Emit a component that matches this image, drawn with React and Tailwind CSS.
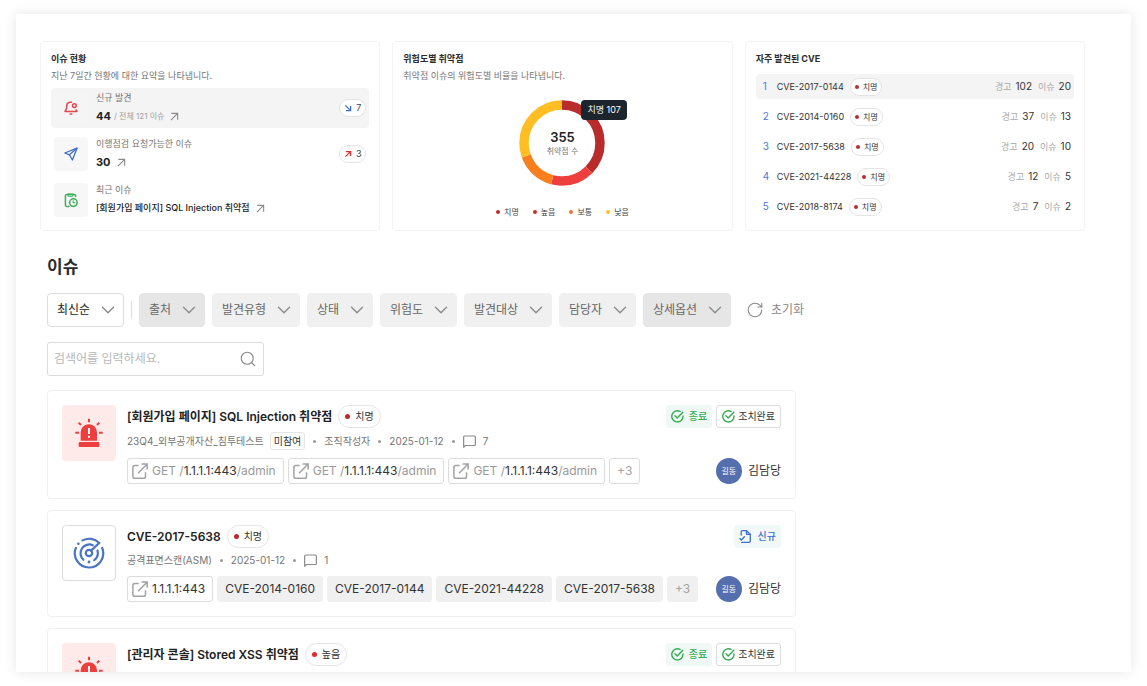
import React, { useState } from "react";
import { ChevronDown, RotateCw, Search } from "lucide-react";

const SUMMARY = [
  { id: "new", label: "신규 발견", value: "44", note: "/ 전체 121 이슈", icon: "bell", trend: "down", diff: 7 },
  { id: "check", label: "이행점검 요청가능한 이슈", value: "30", icon: "plane", trend: "up", diff: 3 },
  { id: "recent", label: "최근 이슈", title: "[회원가입 페이지] SQL Injection 취약점", icon: "clipboard" },
];

// start / end are degrees on the ring
const RISKS = [
  { name: "치명", start: 0, end: 135, color: "#b92c2c", dot: "bg-[#b92c2c]" },
  { name: "높음", start: 135, end: 195, color: "#ef3e3e", dot: "bg-[#c53030]" },
  { name: "보통", start: 195, end: 250, color: "#f97f1e", dot: "bg-[#f0743a]" },
  { name: "낮음", start: 250, end: 360, color: "#ffbf24", dot: "bg-[#ffbf24]" },
];

const CVES = [
  { id: "CVE-2017-0144", alerts: 102, issues: 20 },
  { id: "CVE-2014-0160", alerts: 37, issues: 13 },
  { id: "CVE-2017-5638", alerts: 20, issues: 10 },
  { id: "CVE-2021-44228", alerts: 12, issues: 5 },
  { id: "CVE-2018-8174", alerts: 7, issues: 2 },
];

const FILTERS = [
  { name: "출처", dark: true },
  { name: "발견유형" },
  { name: "상태" },
  { name: "위험도" },
  { name: "발견대상" },
  { name: "담당자" },
  { name: "상세옵션", dark: true },
];

const ISSUES = [
  {
    id: 1,
    kind: "siren",
    title: "[회원가입 페이지] SQL Injection 취약점",
    risk: "치명",
    source: "23Q4_외부공개자산_침투테스트",
    tag: "미참여",
    author: "조직작성자",
    date: "2025-01-12",
    comments: 7,
    done: true,
    paths: ["1.1.1.1:443", "1.1.1.1:443", "1.1.1.1:443"],
    owner: "김담당",
  },
  {
    id: 2,
    kind: "radar",
    title: "CVE-2017-5638",
    risk: "치명",
    source: "공격표면스캔(ASM)",
    date: "2025-01-12",
    comments: 1,
    host: "1.1.1.1:443",
    cves: ["CVE-2014-0160", "CVE-2017-0144", "CVE-2021-44228", "CVE-2017-5638"],
    owner: "김담당",
  },
  {
    id: 3,
    kind: "siren",
    title: "[관리자 콘솔] Stored XSS 취약점",
    risk: "높음",
    done: true,
  },
];

/* ---------- icons ---------- */

function BellIcon() {
  return (
    <svg className="w-4 h-4 text-[#e5484d]" viewBox="0 0 16 16" fill="none" stroke="currentColor" strokeWidth="1.5" strokeLinecap="round" strokeLinejoin="round">
      <path d="M8.6 2.2H7.4a3.6 3.6 0 0 0-3.6 3.4l-.3 3.1L2 11.4h12l-.9-1.6" />
      <circle cx="11.4" cy="5.6" r="1.9" />
      <path d="M7.2 14h1.6" strokeWidth="1.6" />
    </svg>
  );
}

function PlaneIcon() {
  return (
    <svg className="w-4 h-4 text-[#3f6fcb]" viewBox="0 0 16 16" fill="none" stroke="currentColor" strokeWidth="1.3" strokeLinecap="round" strokeLinejoin="round">
      <path d="M14 2.2 1.8 7l4.600 1.800L9.400 14z" />
      <path d="M6.4 8.8 14 2.2" />
    </svg>
  );
}

function ClipboardIcon() {
  return (
    <svg className="w-4 h-4 text-[#3fae5a]" viewBox="0 0 16 16" fill="none" stroke="currentColor" strokeWidth="1.5" strokeLinecap="round" strokeLinejoin="round">
      <path d="M6 14.4H3.8A1.4 1.4 0 0 1 2.4 13V3.8a1.4 1.4 0 0 1 1.4-1.4h7.4a1.4 1.4 0 0 1 1.4 1.4v.8" />
      <path d="M5 2v1.2c0 .6.4 1 1 1h3c.6 0 1-.4 1-1V2z" strokeWidth="1.1" />
      <circle cx="10.4" cy="10.6" r="3.8" />
      <path d="M10.2 8.8v2h1.5" strokeWidth="1.1" />
    </svg>
  );
}

function ArrowIcon({ className }) {
  return (
    <svg className={className} viewBox="0 0 10 10" fill="none" stroke="currentColor" strokeWidth="1.2" strokeLinecap="square">
      <path d="M2 1.5h6.5V8M8.5 1.5l-7 7" />
    </svg>
  );
}

function TrendIcon({ up }) {
  return (
    <svg className={`w-2 h-2 ${up ? "text-[#d93030]" : "text-[#3f6fcb]"}`} viewBox="0 0 8 8" fill="none" stroke="currentColor" strokeWidth="1.3">
      {up ? <path d="M2 1.6h4.6V6M6.6 1.6 1.4 6.6" /> : <path d="M6.6 2v4.6H2M6.6 6.6 1.4 1.4" />}
    </svg>
  );
}

function SirenIcon() {
  return (
    <svg className="w-7 h-[30px]" viewBox="0 0 84 90" fill="none" stroke="#ef3e3e" strokeWidth="6">
      <path d="M17 68V43a24.500 24.500 0 0 1 49 0v25z" fill="#ef3e3e" stroke="none" />
      <rect x="11" y="72" width="62" height="15" rx="3" fill="#ef3e3e" stroke="none" />
      <path d="M42 2v11M1 44h11M72 44h11M11 14l7 7M73 14l-7 7" />
      <path d="M42 30v18M42 53v6" stroke="#fff" />
    </svg>
  );
}

function RadarIcon() {
  return (
    <svg className="w-8 h-8" viewBox="0 0 32 32" fill="none" stroke="#4a74c4" strokeWidth="2.200" strokeLinecap="round">
      <path d="M9.500 3.400A14.200 14.200 0 0 1 26.200 6L18 13.600" />
      <path d="M2.900 10.900A14.200 14.200 0 1 0 29.200 11" />
      <path d="M19.800 8.200A8.800 8.800 0 0 0 10.400 22.800" />
      <path d="M24.500 13.500A8.800 8.800 0 0 1 21.200 23.100" />
      <circle cx="16" cy="16" r="3.200" />
      <circle cx="5.400" cy="6.800" r="1.300" fill="#4a74c4" stroke="none" />
      <circle cx="16" cy="25" r="1.400" fill="#4a74c4" stroke="none" />
    </svg>
  );
}

function LinkIcon() {
  return (
    <svg className="w-4 h-4 text-[#a3a3a3]" viewBox="0 0 16 16" fill="none" stroke="currentColor" strokeWidth="1.5">
      <path d="M6.600 2.600H2.700A1.800 1.800 0 0 0 .9 4.400v9a1.800 1.800 0 0 0 1.800 1.800h9a1.800 1.800 0 0 0 1.800-1.800V9.200" />
      <path d="M9.600 1h5.600v5.600M15.200 1 6 10.200" />
    </svg>
  );
}

function CommentIcon() {
  return (
    <svg className="w-[13px] h-[13px] text-[#8a8a8a]" viewBox="0 0 12 12" fill="none" stroke="currentColor" strokeWidth="1.100" strokeLinejoin="round">
      <path d="M.6 11.300V1.800A.9.9 0 0 1 1.500.9h9a.9.9 0 0 1 .9.9v7a.9.9 0 0 1-.9.9H2.300z" />
    </svg>
  );
}

function CheckIcon() {
  return (
    <svg className="w-[13px] h-[13px] text-[#35ab52]" viewBox="0 0 13 13" fill="none" stroke="currentColor" strokeWidth="1.400" strokeLinecap="round" strokeLinejoin="round">
      <path d="M9.200 1.500A5.600 5.600 0 1 0 12 6" />
      <path d="m4 5.800 2.200 2.200 5.600-5.800" />
    </svg>
  );
}

function FileIcon() {
  return (
    <svg className="w-[13px] h-[13px] text-[#3f6fcb]" viewBox="0 0 13 13" fill="none" stroke="currentColor" strokeWidth="1.300" strokeLinecap="round" strokeLinejoin="round">
      <path d="M2.200 5V2A1.300 1.300 0 0 1 3.500.7h4L11.300 4.300V11a1.300 1.300 0 0 1-1.300 1.300H2.600" />
      <path d="M7.500.9v3.400h3.600" />
      <path d="M.9 8.600 2.400 10l3-3.200" />
    </svg>
  );
}

const SUMMARY_ICONS = { bell: BellIcon, plane: PlaneIcon, clipboard: ClipboardIcon };

/* ---------- small pieces ---------- */

function RiskBadge({ name, small }) {
  const dot = name === "높음" ? "bg-[#e02b2b]" : "bg-[#b92c2c]";
  return (
    <span
      className={`inline-flex items-center rounded-full border border-[#e4e4e4] bg-white text-[#333] ${
        small ? "h-[18px] px-1 gap-1 text-[8px]" : "h-[23px] px-1.5 gap-[5px] text-[10px]"
      }`}
    >
      <span className={`rounded-full ${dot} ${small ? "w-1 h-1" : "w-[5px] h-[5px]"}`} />
      <span>{name}</span>
    </span>
  );
}

function Panel({ title, desc, children }) {
  return (
    <section className="border border-[#f3f3f3] rounded p-2.5 min-w-0">
      <h2 className="text-[9px] leading-[14px] font-bold text-[#2b2b2b]">{title}</h2>
      {desc && <p className="mt-0.5 text-[9px] leading-4 text-[#757575]">{desc}</p>}
      {children}
    </section>
  );
}

function SummaryRow({ item, active }) {
  const Icon = SUMMARY_ICONS[item.icon];
  return (
    <li className={`flex items-center h-10 px-[3px] rounded ${active ? "bg-[#f4f4f4]" : ""}`}>
      <div className={`w-[34px] h-[34px] rounded flex items-center justify-center ${active ? "bg-[#f5f5f5]" : "bg-[#f7f7f7]"}`}>
        <Icon />
      </div>
      <div className="ml-2 flex-1 min-w-0">
        <p className="text-[9px] leading-4 text-[#757575]">{item.label}</p>
        <a href="#issues" className="flex items-center leading-5 whitespace-nowrap">
          {item.value && <span className="text-[11px] font-bold text-[#222]">{item.value}</span>}
          {item.title && <span className="text-[9px] font-medium text-[#222]">{item.title}</span>}
          {item.note && <span className="ml-[3px] text-[8px] text-[#a0a0a0]">{item.note}</span>}
          <ArrowIcon className="ml-1.5 w-[9px] h-[9px] text-[#8a8a8a]" />
        </a>
      </div>
      {item.trend && (
        <span className="flex items-center justify-center gap-1 w-[27px] h-[18px] rounded-full border border-[#e4e4e4] bg-white text-[9px] text-[#444]">
          <TrendIcon up={item.trend === "up"} />
          {item.diff}
        </span>
      )}
    </li>
  );
}

function RiskChart() {
  return (
    <div className="mt-4 flex flex-col items-center">
      <div className="relative w-[86px] h-[86px] flex flex-col items-center justify-center">
        <svg className="absolute inset-0 w-full h-full -rotate-90" viewBox="0 0 86 86" fill="none" strokeWidth="9.500">
          {RISKS.map((r) => (
            <circle
              key={r.name}
              cx="43"
              cy="43"
              r="38"
              pathLength="360"
              stroke={r.color}
              strokeDasharray={`${r.end - r.start} 360`}
              strokeDashoffset={-r.start}
            />
          ))}
        </svg>
        <strong className="text-[13px] leading-4 font-semibold text-[#222]">355</strong>
        <span className="text-[8px] leading-3 text-[#757575]">취약점 수</span>
        <div className="absolute left-[62px] top-0 h-5 px-1.5 rounded-sm bg-[#1c252e] text-white text-[9px] leading-5 whitespace-nowrap">
          치명 107
        </div>
      </div>
      <ul className="mt-[19px] flex gap-3.5 text-[8px] leading-[14px] text-[#444]">
        {RISKS.map((r) => (
          <li key={r.name} className="flex items-center gap-1">
            <span className={`w-1 h-1 rounded-full ${r.dot}`} />
            {r.name}
          </li>
        ))}
      </ul>
    </div>
  );
}

function CveList() {
  return (
    <ol className="mt-2 flex flex-col gap-[5px] text-[10px]">
      {CVES.map((c, i) => (
        <li key={c.id} className={`flex items-center h-[25px] pl-[7px] pr-[3px] rounded-sm ${i === 0 ? "bg-[#f4f4f4]" : ""}`}>
          <span className="w-3.5 text-[#4a7ad8]">{i + 1}</span>
          <a href="#issues" className="mr-1.5 text-[9px] text-[#333]">{c.id}</a>
          <RiskBadge name="치명" small />
          <span className="ml-auto flex items-center gap-1 text-[#333]">
            <span className="text-[9px] text-[#a8a8a8]">경고</span>
            {c.alerts}
            <span className="ml-0.5 text-[9px] text-[#a8a8a8]">이슈</span>
            {c.issues}
          </span>
        </li>
      ))}
    </ol>
  );
}

function FilterSelect({ name, look }) {
  return (
    <div className="relative">
      <select
        aria-label={name}
        className={`appearance-none h-[34px] pl-[9px] pr-8 rounded border text-[12px] outline-none cursor-pointer ${look}`}
      >
        <option>{name}</option>
      </select>
      <ChevronDown className="absolute right-[5px] top-1.5 w-[22px] h-[22px] text-[#8a8a8a] pointer-events-none" strokeWidth={1.5} />
    </div>
  );
}

function Chip({ children, filled }) {
  return (
    <span
      className={`inline-flex items-center h-[26px] px-[7px] rounded-[3px] border whitespace-nowrap ${
        filled ? "bg-[#f0f0f0] border-[#f0f0f0]" : "bg-white border-[#dcdcdc]"
      }`}
    >
      {children}
    </span>
  );
}

function LinkChip({ children }) {
  return (
    <a href="#issues" className="inline-flex items-center gap-1 h-[26px] pl-1 pr-[7px] rounded-[3px] border border-[#dcdcdc] bg-white whitespace-nowrap">
      <LinkIcon />
      <span>{children}</span>
    </a>
  );
}

function Bullet() {
  return <span className="w-[3px] h-[3px] mx-2 rounded-full bg-[#999]" />;
}

function IssueMeta({ issue }) {
  return (
    <div className={`mt-1 flex items-center text-[10px] text-[#757575] whitespace-nowrap ${issue.tag ? "h-[18px]" : "h-4"}`}>
      <span>{issue.source}</span>
      {issue.tag && (
        <span className="ml-1.5 px-[3px] h-[18px] leading-4 rounded-[3px] border border-[#e4e4e4] text-[#333]">
          {issue.tag}
        </span>
      )}
      <Bullet />
      {issue.author && (
        <>
          <span>{issue.author}</span>
          <Bullet />
        </>
      )}
      <span>{issue.date}</span>
      <Bullet />
      <CommentIcon />
      <span className="ml-[7px]">{issue.comments}</span>
    </div>
  );
}

function IssueTargets({ issue }) {
  return (
    <div className="mt-2 flex items-center gap-1 text-[12px] text-[#333]">
      {issue.paths &&
        issue.paths.map((host, i) => (
          <LinkChip key={i}>
            <span className="text-[#999]">GET /</span>
            {host}
            <span className="text-[#999]">/admin</span>
          </LinkChip>
        ))}
      {issue.host && <LinkChip>{issue.host}</LinkChip>}
      {issue.cves && issue.cves.map((c) => <Chip key={c} filled>{c}</Chip>)}
      <Chip filled={!!issue.cves}>
        <span className="text-[#a3a3a3]">+3</span>
      </Chip>
      <div className="ml-auto flex items-center gap-1.5 whitespace-nowrap">
        <span className="w-[26px] h-[26px] rounded-full bg-[#556fae] text-white text-[8px] flex items-center justify-center">
          길동
        </span>
        {issue.owner}
      </div>
    </div>
  );
}

function IssueCard({ issue }) {
  return (
    <li className="flex gap-[11px] p-3.5 border border-[#f0f0f0] rounded">
      <div
        className={`shrink-0 w-[54px] h-14 rounded flex items-center justify-center ${
          issue.kind === "siren" ? "bg-[#ffeaea]" : "border border-[#dcdcdc]"
        }`}
      >
        {issue.kind === "siren" ? <SirenIcon /> : <RadarIcon />}
      </div>

      <div className="flex-1 min-w-0">
        <div className="flex items-center h-[23px]">
          <h3 className="mr-1.5 text-[12px] font-semibold text-[#222] whitespace-nowrap">{issue.title}</h3>
          <RiskBadge name={issue.risk} />
          <div className="ml-auto flex gap-1 text-[10px]">
            {issue.done ? (
              <>
                <span className="flex items-center gap-[5px] h-[23px] px-[5px] rounded-[3px] bg-[#f0f8f6] text-[#35ab52] font-medium">
                  <CheckIcon />
                  종료
                </span>
                <span className="flex items-center gap-[3px] h-[23px] px-[5px] rounded-[3px] border border-[#dcdcdc] text-[#333]">
                  <CheckIcon />
                  조치완료
                </span>
              </>
            ) : (
              <span className="flex items-center gap-1.5 h-[23px] px-[5px] rounded-[3px] bg-[#f0f8f8] text-[#3f6fcb] font-medium">
                <FileIcon />
                신규
              </span>
            )}
          </div>
        </div>

        {issue.source && <IssueMeta issue={issue} />}
        {issue.owner && <IssueTargets issue={issue} />}
      </div>
    </li>
  );
}

export default function App() {
  const [query, setQuery] = useState("");

  return (
    <div className="h-screen px-4 py-3.5 bg-white font-['Inter','Noto_Sans_CJK_KR',sans-serif]">
      <main className="h-full overflow-hidden bg-white shadow-[0_0_12px_rgba(0,0,0,0.1)] pt-[27px] pl-6 pr-[46px]">
        <div className="grid grid-cols-3 gap-3">
          <Panel title="이슈 현황" desc="지난 7일간 현황에 대한 요약을 나타냅니다.">
            <ul className="mt-1 flex flex-col gap-1.5">
              {SUMMARY.map((item, i) => (
                <SummaryRow key={item.id} item={item} active={i === 0} />
              ))}
            </ul>
          </Panel>
          <Panel title="위험도별 취약점" desc="취약점 이슈의 위험도별 비율을 나타냅니다.">
            <RiskChart />
          </Panel>
          <Panel title="자주 발견된 CVE">
            <CveList />
          </Panel>
        </div>

        <section id="issues" className="mt-6 pl-[7px]">
          <h1 className="text-[17px] leading-6 font-semibold text-[#2b2b2b]">이슈</h1>

          {/* Filters */}
          <div className="mt-3.5 flex items-center gap-[7px]">
            <FilterSelect name="최신순" look="bg-white border-[#dcdcdc] text-[#222]" />
            <span className="w-px h-[18px] bg-[#dcdcdc]" />
            {FILTERS.map((f) => (
              <FilterSelect
                key={f.name}
                name={f.name}
                look={f.dark ? "bg-[#e6e6e6] border-[#e6e6e6] text-[#666]" : "bg-[#f0f0f0] border-[#f0f0f0] text-[#666]"}
              />
            ))}
            <button type="button" onClick={() => setQuery("")} className="ml-2 flex items-center gap-[7px] text-[12px] text-[#8a8a8a] cursor-pointer">
              <RotateCw className="w-[18px] h-[18px]" strokeWidth={1.5} />
              초기화
            </button>
          </div>

          <label className="mt-[15px] flex items-center w-[217px] h-[34px] px-1.5 rounded-[3px] border border-[#dcdcdc]">
            <input
              type="text"
              aria-label="검색어"
              value={query}
              onChange={(e) => setQuery(e.target.value)}
              placeholder="검색어를 입력하세요."
              className="flex-1 min-w-0 text-[12px] outline-none placeholder:text-[#b8b8b8]"
            />
            <Search className="w-[18px] h-[18px] text-[#8a8a8a]" strokeWidth={1.5} />
          </label>

          <ul className="mt-3.5 flex flex-col gap-[11px] max-w-[749px]">
            {ISSUES.map((issue) => (
              <IssueCard key={issue.id} issue={issue} />
            ))}
          </ul>
        </section>
      </main>
    </div>
  );
}
